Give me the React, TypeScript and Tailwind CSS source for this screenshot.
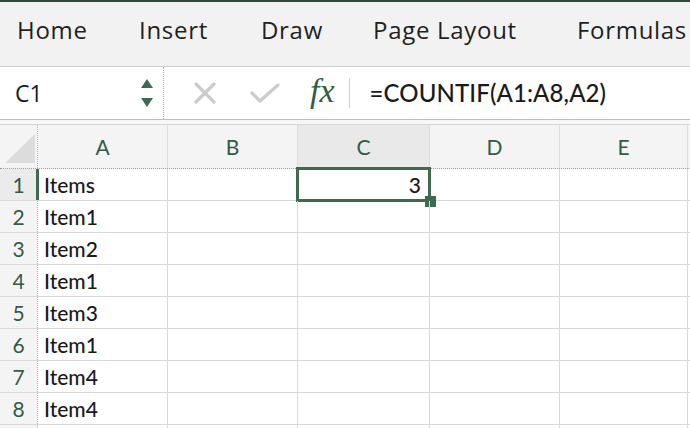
import React from 'react';

const tabs = [
  { label: 'Home', x: 'w-[122px]' },
  { label: 'Insert', x: 'w-[122px]' },
  { label: 'Draw', x: 'w-[112px]' },
  { label: 'Page Layout', x: 'w-[204px]' },
  { label: 'Formulas', x: 'w-[120px]' },
];

const columns = [
  { key: 'A', w: 'w-[130px]' },
  { key: 'B', w: 'w-[130px]' },
  { key: 'C', w: 'w-[132px]' },
  { key: 'D', w: 'w-[130px]' },
  { key: 'E', w: 'w-[128px]' },
];

const rows = ['Items', 'Item1', 'Item2', 'Item1', 'Item3', 'Item1', 'Item4', 'Item4', ''];

function Spinner() {
  return (
    <svg width="14" height="32" viewBox="0 0 14 32" className="text-[#3d6a51]">
      <path d="M7 2 L13 11 L1 11 Z" fill="currentColor" />
      <path d="M1 21 L13 21 L7 30 Z" fill="currentColor" />
    </svg>
  );
}

export default function App() {
  return (
    <div className="w-[690px] h-[428px] overflow-hidden bg-white font-['Lato',sans-serif] text-[#1a1a1a]">
      {/* Ribbon tabs */}
      <div className="h-[67px] bg-[#f2f2f2] border-t-2 border-[#2f4a3b] border-b border-b-[#cfcfcf] flex items-center pl-[17px] pb-[8px]">
        {tabs.map((t) => (
          <div
            key={t.label}
            className={`${t.x} shrink-0 font-['Open_Sans',sans-serif] font-medium text-[24px] tracking-[0.7px] text-[#1f1f1f] whitespace-nowrap`}
          >
            {t.label}
          </div>
        ))}
      </div>

      {/* Formula bar */}
      <div className="h-[53px] flex border-b border-[#bdbdbd]">
        <div className="w-[164px] shrink-0 flex items-center justify-between pl-[15px] pr-[9px] border-r border-dotted border-[#a8a8a8]">
          <span className="font-['Open_Sans',sans-serif] text-[23px]">C1</span>
          <Spinner />
        </div>
        <div className="flex-1 flex items-center pl-[30px]">
          <svg width="22" height="22" viewBox="0 0 22 22" className="text-[#cbcbcb]">
            <path d="M2 2 L20 20 M20 2 L2 20" stroke="currentColor" strokeWidth="3.2" strokeLinecap="round" />
          </svg>
          <svg width="30" height="22" viewBox="0 0 30 22" className="ml-[34px] text-[#cbcbcb]">
            <path d="M2 11 L10 19 L28 3" stroke="currentColor" strokeWidth="3.2" fill="none" strokeLinecap="round" strokeLinejoin="round" />
          </svg>
          <span className="ml-[30px] font-['Liberation_Serif',serif] italic text-[34px] leading-none text-[#2f5c43] pb-[4px]">
            fx
          </span>
          <div className="ml-[14px] w-px h-[30px] bg-[#d0d0d0]" />
          <span className="ml-[20px] font-['Lato',sans-serif] font-medium text-[24px] tracking-[0.1px]">=COUNTIF(A1:A8,A2)</span>
        </div>
      </div>

      {/* Gap between formula bar and grid */}
      <div className="h-[5px] bg-[#f7f7f7] border-b border-[#d6d6d6]" />

      {/* Column headers */}
      <div className="h-[44px] flex bg-[#f4f4f4] border-b border-dotted border-[#9f9f9f]">
        <div className="w-[38px] shrink-0 border-r border-dotted border-[#b5b5b5] relative">
          <svg width="30" height="29" viewBox="0 0 30 29" className="absolute left-[5px] bottom-[5px]">
            <path d="M30 0 L30 29 L0 29 Z" fill="#dcdcdc" />
          </svg>
        </div>
        {columns.map((c) => (
          <div
            key={c.key}
            className={`${c.w} shrink-0 flex items-center justify-center text-[21px] text-[#2f5c43] border-r border-[#dcdcdc] ${
              c.key === 'C' ? 'bg-[#e9e9e9]' : ''
            }`}
          >
            {c.key}
          </div>
        ))}
      </div>

      {/* Rows */}
      {rows.map((r, i) => (
        <div key={i} className="h-[32px] flex border-b border-[#d8d8d8]">
          <div
            className={`w-[38px] shrink-0 flex items-center justify-center text-[21px] text-[#2f5c43] border-r border-dotted border-[#b5b5b5] relative ${
              i === 0 ? 'bg-[#ebebeb]' : 'bg-[#f4f4f4]'
            }`}
          >
            {i < 8 ? i + 1 : ''}
            {i === 0 && <div className="absolute right-[-2px] top-0 bottom-0 w-[3px] bg-[#3d6a51]" />}
          </div>
          {columns.map((c) => (
            <div
              key={c.key}
              className={`${c.w} shrink-0 flex items-center border-r border-[#d8d8d8] text-[21px] font-medium relative`}
            >
              {c.key === 'A' && <span className="pl-[6px]">{r}</span>}
              {c.key === 'C' && i === 0 && (
                <>
                  <span className="ml-auto pr-[8px]">3</span>
                  <div className="absolute left-[-2px] right-[-2px] top-[-2px] bottom-[-2px] border-[3px] border-[#3d6a51]" />
                  <div className="absolute right-[-7px] bottom-[-7px] w-[11px] h-[11px] bg-[#3d6a51]" />
                </>
              )}
            </div>
          ))}
        </div>
      ))}
    </div>
  );
}
